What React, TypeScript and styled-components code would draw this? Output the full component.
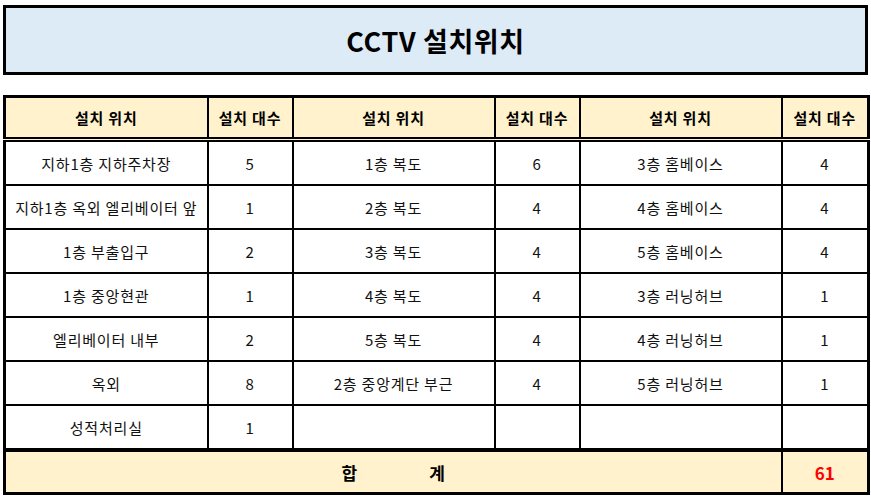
import React from "react";
import styled, { createGlobalStyle } from "styled-components";

const Global = createGlobalStyle`
  html, body { margin: 0; padding: 0; background: #ffffff; }
  body { font-family: "Noto Sans CJK KR", "Noto Sans", sans-serif; color: #000; }
`;

const Page = styled.div`
  padding: 5px 3px 0 3px;
  width: 865px;
  display: flex;
  flex-direction: column;
  gap: 20px;
`;

const TitleBox = styled.div`
  box-sizing: border-box;
  height: 70px;
  border: 3px solid #000;
  background: #ddebf7;
  display: flex;
  align-items: center;
  justify-content: center;
  font-size: 27px;
  font-weight: 700;
  letter-spacing: 0.6px;
`;

const Table = styled.table`
  border-collapse: collapse;
  width: 864px;
  table-layout: fixed;
  border: 3px solid #000;
`;

const HeadCell = styled.th`
  background: #fff2cc;
  border: 2px solid #000;
  border-bottom: 5px double #000;
  height: 39px;
  padding: 0;
  font-size: 15px;
  font-weight: 700;
  letter-spacing: 0.8px;
  text-align: center;
`;

const Cell = styled.td`
  border: 2px solid #000;
  height: 42px;
  padding: 0;
  font-size: 15px;
  font-weight: 400;
  letter-spacing: 0.8px;
  text-align: center;
  white-space: nowrap;
  color: #111;
`;

const TotalCell = styled.td<{ $red?: boolean }>`
  background: #fff2cc;
  border: 2px solid #000;
  border-top: 4px solid #000;
  height: 40px;
  padding: 0;
  font-size: 17px;
  font-weight: 700;
  text-align: center;
  color: ${(p) => (p.$red ? "#ff0000" : "#000")};
`;

const TotalLabel = styled.span`
  display: inline-flex;
  gap: 72px;
`;

type Row = [string, string, string, string, string, string];

const rows: Row[] = [
  ["지하1층 지하주차장", "5", "1층 복도", "6", "3층 홈베이스", "4"],
  ["지하1층 옥외 엘리베이터 앞", "1", "2층 복도", "4", "4층 홈베이스", "4"],
  ["1층 부출입구", "2", "3층 복도", "4", "5층 홈베이스", "4"],
  ["1층 중앙현관", "1", "4층 복도", "4", "3층 러닝허브", "1"],
  ["엘리베이터 내부", "2", "5층 복도", "4", "4층 러닝허브", "1"],
  ["옥외", "8", "2층 중앙계단 부근", "4", "5층 러닝허브", "1"],
  ["성적처리실", "1", "", "", "", ""],
];

const widths = [203, 85, 202, 85, 202, 87];

export default function App() {
  return (
    <>
      <Global />
      <Page>
        <TitleBox>CCTV 설치위치</TitleBox>
        <Table>
          <colgroup>
            {widths.map((w, i) => (
              <col key={i} style={{ width: w }} />
            ))}
          </colgroup>
          <thead>
            <tr>
              {[0, 1, 2].map((i) => (
                <React.Fragment key={i}>
                  <HeadCell>설치 위치</HeadCell>
                  <HeadCell>설치 대수</HeadCell>
                </React.Fragment>
              ))}
            </tr>
          </thead>
          <tbody>
            {rows.map((r, ri) => (
              <tr key={ri}>
                {r.map((c, ci) => (
                  <Cell key={ci}>{c}</Cell>
                ))}
              </tr>
            ))}
            <tr>
              <TotalCell colSpan={5}>
                <TotalLabel>
                  <span>합</span>
                  <span>계</span>
                </TotalLabel>
              </TotalCell>
              <TotalCell $red>61</TotalCell>
            </tr>
          </tbody>
        </Table>
      </Page>
    </>
  );
}
